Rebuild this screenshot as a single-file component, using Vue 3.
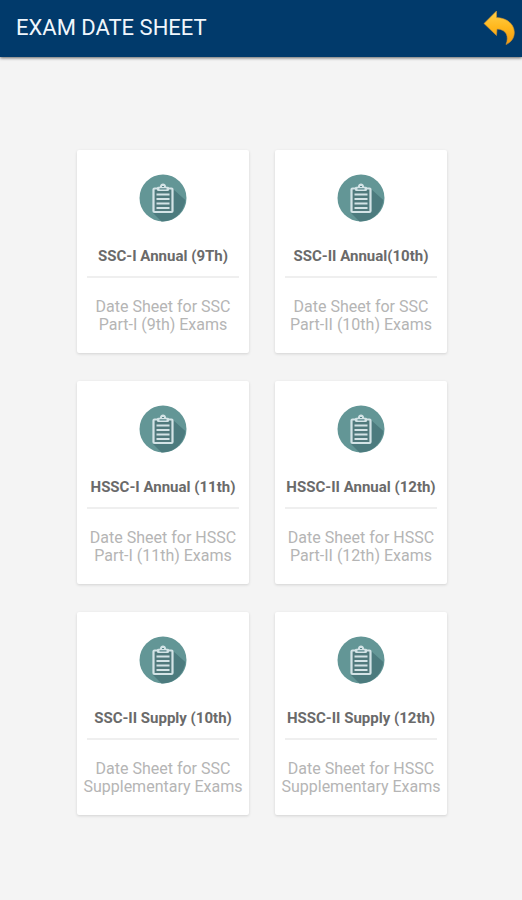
<template>
    <div class="page">
        <header class="toolbar">
            <h1 class="title">EXAM DATE SHEET</h1>
            <button type="button" class="btn-back" aria-label="Back" @click="goBack">
                <svg viewBox="0 0 32 36" width="32" height="36">
                    <defs>
                        <linearGradient id="arrow" x1="0" y1="0" x2="0" y2="1">
                            <stop offset="0" stop-color="#ffd04a" />
                            <stop offset="0.5" stop-color="#ffb71c" />
                            <stop offset="1" stop-color="#f29a12" />
                        </linearGradient>
                    </defs>
                    <path
                        d="M1 13.500 L13.500 1 L13.500 7.500 C24 8 31 14 31.300 22 C31.500 28 28 32.500 23 34.500 C26 27 24 19.500 14 19 L13.500 25.500 Z"
                        fill="url(#arrow)"
                        stroke="#d29432"
                        stroke-width="0.6"
                        stroke-linejoin="round"
                    />
                </svg>
            </button>
        </header>

        <main class="grid">
            <a v-for="sheet in sheets" :key="sheet.title" href="#" class="card" @click.prevent="selected = sheet.title">
                <svg class="icon" viewBox="0 0 48 48" width="48" height="48" aria-hidden="true">
                    <circle cx="24" cy="24" r="23.500" fill="#639696" />
                    <path d="M34 15 L46.300 26 A23.500 23.500 0 0 1 22.500 47.400 L14 39 Z" fill="#4c7b7e" />
                    <rect x="14.500" y="14.500" width="19" height="23.500" rx="1" fill="#50797c" stroke="#d3e3e6" stroke-width="2.200" />
                    <path
                        d="M18 16 V14 Q18 12.800 19.500 12.800 H20.800 Q21.500 9.500 24 9.500 Q26.500 9.500 27.200 12.800 H28.500 Q30 12.800 30 14 V16 Q30 17 28.500 17 H19.500 Q18 17 18 16 Z"
                        fill="#d3e3e6"
                    />
                    <path d="M20.500 14.800 H27.500 M23 12.500 H25" stroke="#57868a" stroke-width="1.200" />
                    <path d="M17.500 20.500 H30.500 M17.500 25 H30.500 M17.500 29.500 H30.500 M17.500 34 H30.500" stroke="#d3e3e6" stroke-width="2" />
                </svg>
                <h2 class="name">{{ sheet.title }}</h2>
                <p class="desc">
                    {{ sheet.lines[0] }}<br />
                    {{ sheet.lines[1] }}
                </p>
            </a>
        </main>
    </div>
</template>

<script setup>
import { ref } from "vue";

const selected = ref(null);

const sheets = [
    { title: "SSC-I Annual (9Th)", lines: ["Date Sheet for SSC", "Part-I (9th) Exams"] },
    { title: "SSC-II Annual(10th)", lines: ["Date Sheet for SSC", "Part-II (10th) Exams"] },
    { title: "HSSC-I Annual (11th)", lines: ["Date Sheet for HSSC", "Part-I (11th) Exams"] },
    { title: "HSSC-II Annual (12th)", lines: ["Date Sheet for HSSC", "Part-II (12th) Exams"] },
    { title: "SSC-II Supply (10th)", lines: ["Date Sheet for SSC", "Supplementary Exams"] },
    { title: "HSSC-II Supply (12th)", lines: ["Date Sheet for HSSC", "Supplementary Exams"] },
];

function goBack() {
    window.history.back();
}
</script>

<style>
body {
    margin: 0;
    background: #f4f4f4;
}
</style>

<style scoped>
.page {
    min-height: 100vh;
    font-family: Roboto, "Liberation Sans", sans-serif;
    background: #f4f4f4;
}

.toolbar {
    display: flex;
    align-items: center;
    justify-content: space-between;
    height: 57px;
    padding: 0 7px 2px 16px;
    box-sizing: border-box;
    background: #013a6b;
    box-shadow: 0 1px 3px rgba(0, 0, 0, 0.6);
}

.title {
    margin: 0;
    font-size: 22px;
    font-weight: 400;
    line-height: 28px;
    color: #f0f6fc;
}

.btn-back {
    display: flex;
    padding: 0;
    border: none;
    background: transparent;
    cursor: pointer;
}

.grid {
    display: grid;
    grid-template-columns: repeat(2, minmax(0, 1fr));
    gap: 28px 26px;
    padding: 93px 75px 84px 77px;
}

.card {
    display: flex;
    flex-direction: column;
    align-items: center;
    padding: 24px 6px 19px;
    border-radius: 2px;
    background: #ffffff;
    box-shadow: 0 1px 3px rgba(0, 0, 0, 0.14);
    text-align: center;
    text-decoration: none;
}

.icon {
    display: block;
}

.name {
    align-self: stretch;
    margin: 24px 4px 0;
    padding-bottom: 10px;
    border-bottom: 2px solid #efefef;
    font-size: 15px;
    font-weight: 700;
    line-height: 20px;
    white-space: nowrap;
    color: #6a6a6a;
}

.desc {
    margin: 20px 0 0;
    font-size: 16px;
    line-height: 18px;
    color: #b5b5b5;
}
</style>
